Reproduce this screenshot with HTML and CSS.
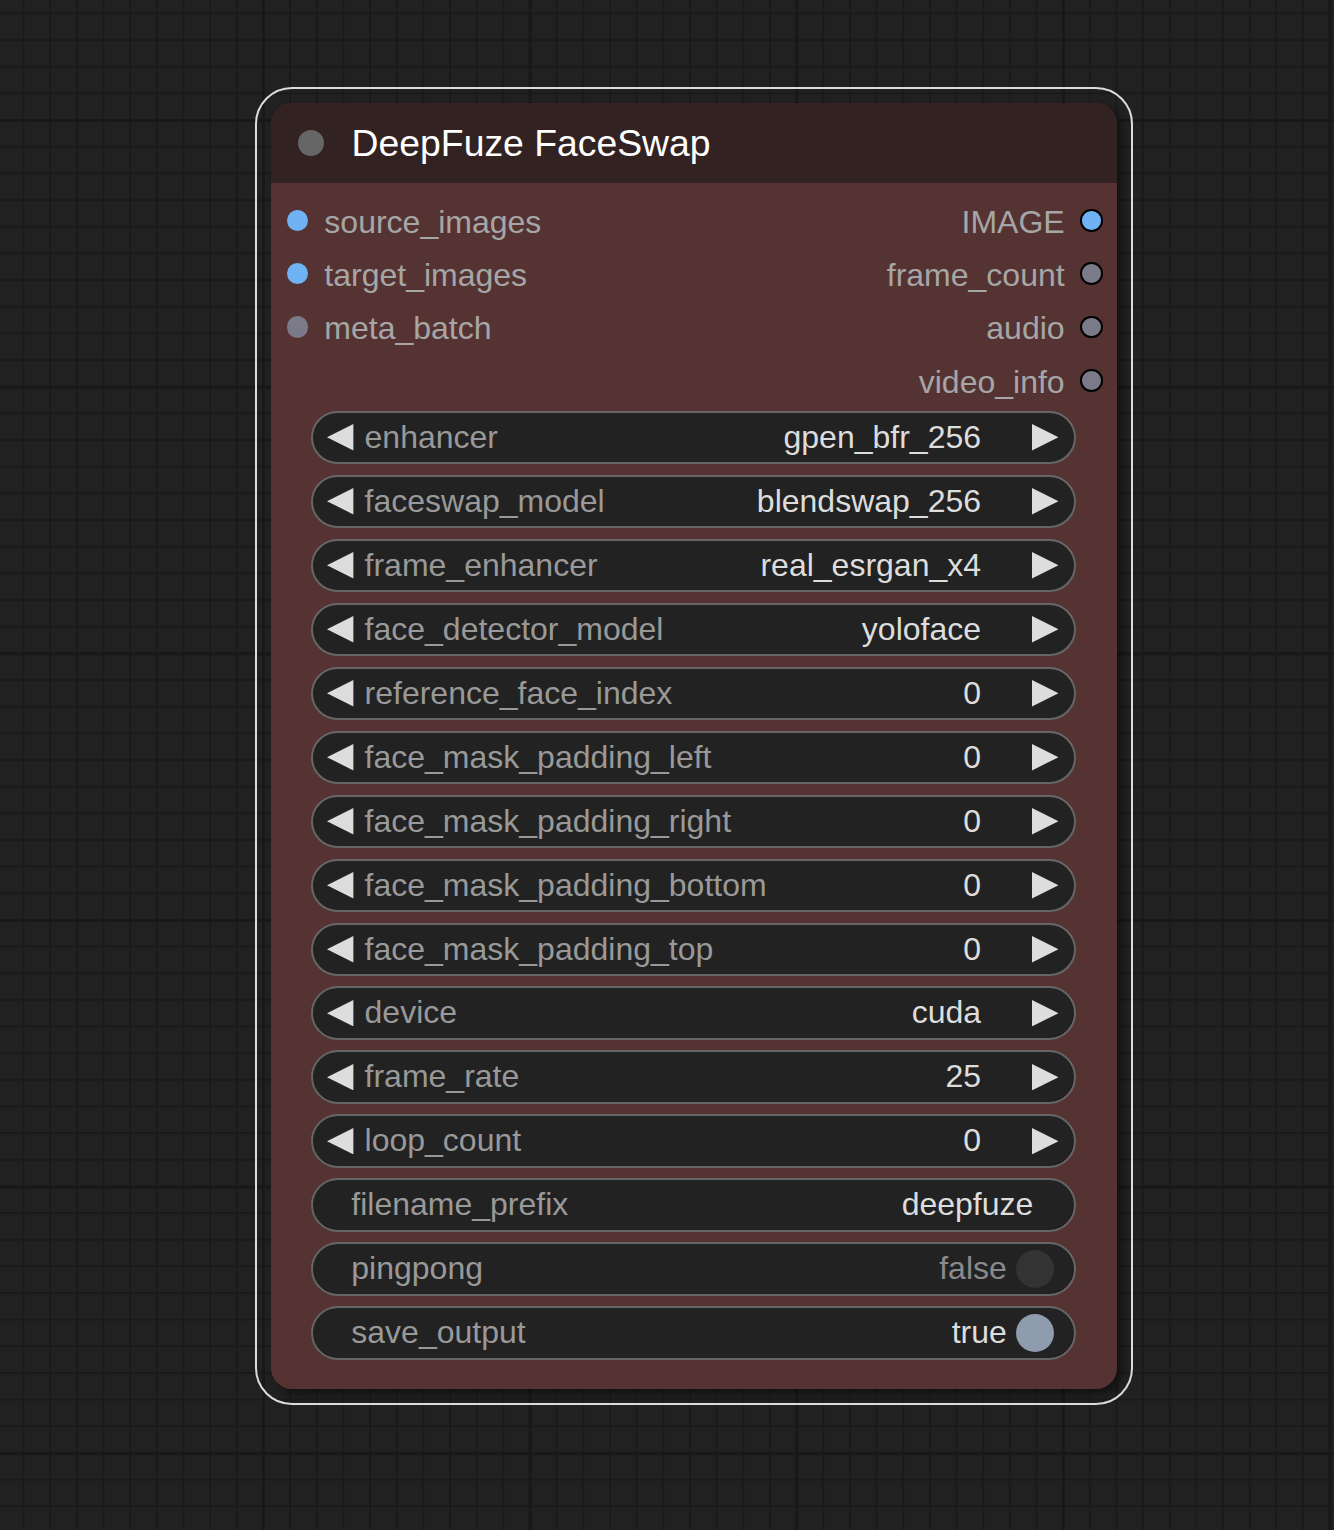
FILE: index.html
```html
<!DOCTYPE html>
<html lang="en">
<head>
<meta charset="utf-8">
<title>DeepFuze FaceSwap</title>
<link rel="stylesheet" href="styles.css">
</head>
<body>
<div class="canvas">
  <div class="selection">
    <div class="node">
      <div class="title">
        <span class="title-dot"></span>
        <span class="title-text">DeepFuze FaceSwap</span>
      </div>
      <div class="body">
        <div class="slots">
          <div class="slot-row">
            <div class="in"><span class="dot blue"></span><span class="slot-label">source_images</span></div>
            <div class="out"><span class="slot-label">IMAGE</span><span class="odot blue"></span></div>
          </div>
          <div class="slot-row">
            <div class="in"><span class="dot blue"></span><span class="slot-label">target_images</span></div>
            <div class="out"><span class="slot-label">frame_count</span><span class="odot gray"></span></div>
          </div>
          <div class="slot-row">
            <div class="in"><span class="dot gray"></span><span class="slot-label">meta_batch</span></div>
            <div class="out"><span class="slot-label">audio</span><span class="odot gray"></span></div>
          </div>
          <div class="slot-row">
            <div class="in"></div>
            <div class="out"><span class="slot-label">video_info</span><span class="odot gray"></span></div>
          </div>
        </div>
        <div class="widgets">
          <div class="widget combo">
            <svg class="arrow" viewBox="0 0 27 27"><polygon points="26.7,0 0,13.35 26.7,26.7"/></svg>
            <span class="w-label">enhancer</span><span class="w-value">gpen_bfr_256</span>
            <svg class="arrow" viewBox="0 0 27 27"><polygon points="0,0 26.7,13.35 0,26.7"/></svg>
          </div>
          <div class="widget combo">
            <svg class="arrow" viewBox="0 0 27 27"><polygon points="26.7,0 0,13.35 26.7,26.7"/></svg>
            <span class="w-label">faceswap_model</span><span class="w-value">blendswap_256</span>
            <svg class="arrow" viewBox="0 0 27 27"><polygon points="0,0 26.7,13.35 0,26.7"/></svg>
          </div>
          <div class="widget combo">
            <svg class="arrow" viewBox="0 0 27 27"><polygon points="26.7,0 0,13.35 26.7,26.7"/></svg>
            <span class="w-label">frame_enhancer</span><span class="w-value">real_esrgan_x4</span>
            <svg class="arrow" viewBox="0 0 27 27"><polygon points="0,0 26.7,13.35 0,26.7"/></svg>
          </div>
          <div class="widget combo">
            <svg class="arrow" viewBox="0 0 27 27"><polygon points="26.7,0 0,13.35 26.7,26.7"/></svg>
            <span class="w-label">face_detector_model</span><span class="w-value">yoloface</span>
            <svg class="arrow" viewBox="0 0 27 27"><polygon points="0,0 26.7,13.35 0,26.7"/></svg>
          </div>
          <div class="widget combo">
            <svg class="arrow" viewBox="0 0 27 27"><polygon points="26.7,0 0,13.35 26.7,26.7"/></svg>
            <span class="w-label">reference_face_index</span><span class="w-value">0</span>
            <svg class="arrow" viewBox="0 0 27 27"><polygon points="0,0 26.7,13.35 0,26.7"/></svg>
          </div>
          <div class="widget combo">
            <svg class="arrow" viewBox="0 0 27 27"><polygon points="26.7,0 0,13.35 26.7,26.7"/></svg>
            <span class="w-label">face_mask_padding_left</span><span class="w-value">0</span>
            <svg class="arrow" viewBox="0 0 27 27"><polygon points="0,0 26.7,13.35 0,26.7"/></svg>
          </div>
          <div class="widget combo">
            <svg class="arrow" viewBox="0 0 27 27"><polygon points="26.7,0 0,13.35 26.7,26.7"/></svg>
            <span class="w-label">face_mask_padding_right</span><span class="w-value">0</span>
            <svg class="arrow" viewBox="0 0 27 27"><polygon points="0,0 26.7,13.35 0,26.7"/></svg>
          </div>
          <div class="widget combo">
            <svg class="arrow" viewBox="0 0 27 27"><polygon points="26.7,0 0,13.35 26.7,26.7"/></svg>
            <span class="w-label">face_mask_padding_bottom</span><span class="w-value">0</span>
            <svg class="arrow" viewBox="0 0 27 27"><polygon points="0,0 26.7,13.35 0,26.7"/></svg>
          </div>
          <div class="widget combo">
            <svg class="arrow" viewBox="0 0 27 27"><polygon points="26.7,0 0,13.35 26.7,26.7"/></svg>
            <span class="w-label">face_mask_padding_top</span><span class="w-value">0</span>
            <svg class="arrow" viewBox="0 0 27 27"><polygon points="0,0 26.7,13.35 0,26.7"/></svg>
          </div>
          <div class="widget combo">
            <svg class="arrow" viewBox="0 0 27 27"><polygon points="26.7,0 0,13.35 26.7,26.7"/></svg>
            <span class="w-label">device</span><span class="w-value">cuda</span>
            <svg class="arrow" viewBox="0 0 27 27"><polygon points="0,0 26.7,13.35 0,26.7"/></svg>
          </div>
          <div class="widget combo">
            <svg class="arrow" viewBox="0 0 27 27"><polygon points="26.7,0 0,13.35 26.7,26.7"/></svg>
            <span class="w-label">frame_rate</span><span class="w-value">25</span>
            <svg class="arrow" viewBox="0 0 27 27"><polygon points="0,0 26.7,13.35 0,26.7"/></svg>
          </div>
          <div class="widget combo">
            <svg class="arrow" viewBox="0 0 27 27"><polygon points="26.7,0 0,13.35 26.7,26.7"/></svg>
            <span class="w-label">loop_count</span><span class="w-value">0</span>
            <svg class="arrow" viewBox="0 0 27 27"><polygon points="0,0 26.7,13.35 0,26.7"/></svg>
          </div>
          <div class="widget text">
            <span class="w-label">filename_prefix</span><span class="w-value">deepfuze</span>
          </div>
          <div class="widget toggle">
            <span class="w-label">pingpong</span><span class="w-value off">false</span><span class="knob off"></span>
          </div>
          <div class="widget toggle">
            <span class="w-label">save_output</span><span class="w-value">true</span><span class="knob on"></span>
          </div>
        </div>
      </div>
    </div>
  </div>
</div>
</body>
</html>
```

FILE: styles.css
```css
html, body {
  margin: 0;
  padding: 0;
}

body {
  width: 1334px;
  height: 1530px;
  overflow: hidden;
  background-color: #212121;
  background-image:
    linear-gradient(to right, #181818 3px, transparent 3px),
    linear-gradient(to bottom, #181818 3px, transparent 3px),
    linear-gradient(to right, #1a1a1a 2px, transparent 2px),
    linear-gradient(to bottom, #1a1a1a 2px, transparent 2px);
  background-size:
    266.667px 266.667px,
    266.667px 266.667px,
    26.667px 26.667px,
    26.667px 26.667px;
  background-position:
    262px 0,
    0 119px,
    22.5px 0,
    0 12.5px;
  font-family: "Liberation Sans", Arial, Helvetica, sans-serif;
}

.canvas {
  padding: 87px 0 0 255px;
}

.selection {
  width: 846px;
  padding: 14px;
  border: 2px solid #dcdcdc;
  border-radius: 37px;
}

.node {
  width: 846px;
  height: 1286px;
  background: #553333;
  border-radius: 21px;
  overflow: hidden;
  box-shadow: 5px 5px 9px rgba(0, 0, 0, 0.45);
  display: flex;
  flex-direction: column;
}

.title {
  height: 80px;
  flex: none;
  background: #332222;
  display: flex;
  align-items: center;
  padding-left: 26.67px;
}

.title-dot {
  width: 26.67px;
  height: 26.67px;
  border-radius: 50%;
  background: #666666;
  flex: none;
}

.title-text {
  margin-left: 27.3px;
  font-size: 37.33px;
  line-height: 80px;
  color: #ffffff;
  white-space: nowrap;
}

.body {
  padding-top: 10.67px;
}

.slot-row {
  height: 53.333px;
  display: flex;
  justify-content: space-between;
}

.in, .out {
  display: flex;
  align-items: center;
}

.in {
  padding-left: 16px;
}

.out {
  padding-right: 14.5px;
}

.slot-label {
  font-size: 32px;
  line-height: 49.33px;
  padding-top: 4px;
  color: #a6a6a6;
  white-space: nowrap;
}

.dot {
  width: 21.33px;
  height: 21.33px;
  border-radius: 50%;
  margin-right: 16px;
  flex: none;
}

.odot {
  width: 18.6px;
  height: 18.6px;
  border: 2.5px solid #000;
  border-radius: 50%;
  margin-left: 15.3px;
  flex: none;
}

.blue { background: #70b3f5; }
.gray { background: #7a7a88; }

.widgets {
  margin-top: 3.67px;
  display: flex;
  flex-direction: column;
  gap: 10.67px;
  padding: 0 41.3px 0 39.7px;
}

.widget {
  box-sizing: border-box;
  height: 53.333px;
  border: 2px solid #666666;
  border-radius: 27px;
  background: #222222;
  display: flex;
  align-items: center;
  font-size: 32px;
  line-height: 49.33px;
  white-space: nowrap;
}

.w-label {
  color: #999999;
  flex: 1;
}

.w-value {
  color: #dddddd;
}

.arrow {
  width: 26.7px;
  height: 26.7px;
  flex: none;
  fill: #dddddd;
}

.combo {
  padding: 0 15.4px 0 14.6px;
}

.combo .w-label {
  margin-left: 10.6px;
}

.combo .w-value {
  margin-right: 50.6px;
}

.text {
  padding: 0 40.4px 0 38.6px;
}

.toggle {
  padding: 0 19.5px 0 38.6px;
}

.toggle .w-value {
  margin-right: 9px;
}

.toggle .w-value.off {
  color: #8a8a8a;
}

.knob {
  width: 38.4px;
  height: 38.4px;
  border-radius: 50%;
  flex: none;
}

.knob.off { background: #333333; }
.knob.on { background: #8e9cae; }
```
